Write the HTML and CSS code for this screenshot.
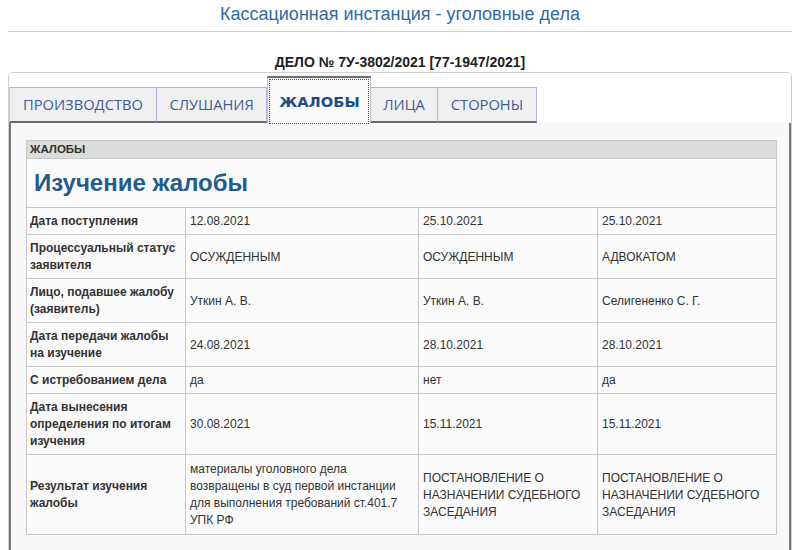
FILE: index.html
```html
<!DOCTYPE html>
<html lang="ru">
<head>
<meta charset="utf-8">
<title>Кассационная инстанция - уголовные дела</title>
<link rel="stylesheet" href="styles.css">
</head>
<body>
<div class="page">
  <h1 class="title">Кассационная инстанция - уголовные дела</h1>
  <div class="case">ДЕЛО № 7У-3802/2021 [77-1947/2021]</div>
  <div class="box">
    <ul class="tabs">
      <li class="tab first">ПРОИЗВОДСТВО</li>
      <li class="tab">СЛУШАНИЯ</li>
      <li class="tab active"><span class="focus">ЖАЛОБЫ</span></li>
      <li class="tab">ЛИЦА</li>
      <li class="tab">СТОРОНЫ</li>
    </ul>
    <div class="panel">
      <table class="grid">
        <colgroup>
          <col class="c1"><col class="c2"><col class="c3"><col class="c4">
        </colgroup>
        <tr><th colspan="4" class="head">ЖАЛОБЫ</th></tr>
        <tr><td colspan="4" class="big">Изучение жалобы</td></tr>
        <tr><td class="lbl">Дата поступления</td><td>12.08.2021</td><td>25.10.2021</td><td>25.10.2021</td></tr>
        <tr><td class="lbl">Процессуальный статус заявителя</td><td>ОСУЖДЕННЫМ</td><td>ОСУЖДЕННЫМ</td><td>АДВОКАТОМ</td></tr>
        <tr><td class="lbl">Лицо, подавшее жалобу (заявитель)</td><td>Уткин А. В.</td><td>Уткин А. В.</td><td>Селигененко С. Г.</td></tr>
        <tr><td class="lbl">Дата передачи жалобы на изучение</td><td>24.08.2021</td><td>28.10.2021</td><td>28.10.2021</td></tr>
        <tr><td class="lbl">С истребованием дела</td><td>да</td><td>нет</td><td>да</td></tr>
        <tr><td class="lbl">Дата вынесения определения по итогам изучения</td><td>30.08.2021</td><td>15.11.2021</td><td>15.11.2021</td></tr>
        <tr class="last"><td class="lbl">Результат изучения жалобы</td><td>материалы уголовного дела возвращены в суд первой инстанции для выполнения требований ст.401.7 УПК РФ</td><td>ПОСТАНОВЛЕНИЕ О НАЗНАЧЕНИИ СУДЕБНОГО ЗАСЕДАНИЯ</td><td>ПОСТАНОВЛЕНИЕ О НАЗНАЧЕНИИ СУДЕБНОГО ЗАСЕДАНИЯ</td></tr>
      </table>
    </div>
  </div>
</div>
</body>
</html>
```
FILE: styles.css
```css
html, body {
  margin: 0;
  padding: 0;
  background: #fff;
  font-family: "Liberation Sans", Arial, sans-serif;
  color: #333;
}

.page {
  padding: 0 8px;
  height: 550px;
  overflow: hidden;
}

.title {
  margin: 0;
  height: 31px;
  line-height: 28px;
  font-size: 18px;
  font-weight: normal;
  text-align: center;
  color: #2f6aa3;
  border-bottom: 1px solid #cfcfcf;
}

.case {
  margin-top: 22px;
  height: 18px;
  line-height: 16px;
  font-size: 14px;
  font-weight: bold;
  text-align: center;
  color: #222;
}

.box {
  border: 1px solid #cfcfcf;
  border-radius: 5px 5px 0 0;
  padding-top: 5px;
  height: 500px;
}

.tabs {
  list-style: none;
  margin: 0;
  padding: 0;
  display: flex;
  align-items: flex-end;
  height: 45px;
}

.tab {
  height: 33px;
  line-height: 33px;
  padding: 0 12.5px;
  font-family: "Open Sans", "Liberation Sans", sans-serif;
  font-size: 14.7px;
  color: #3d5c9c;
  background: #f0f0f0;
  border: 1px solid #b0b0dc;
  border-bottom: 2px solid #6a6a6a;
  border-left-width: 0;
}

.tab.first {
  padding: 0 13px;
  border-left: 1px solid #c8c8c8;
}

.tab.active {
  height: 45px;
  padding: 0;
  background: #fafafa;
  border: 1px solid #c4c4c4;
  border-top: 2px solid #6e6e6e;
  border-bottom: none;
  font-family: "DejaVu Sans", Verdana, sans-serif;
  font-size: 14.7px;
  font-weight: bold;
  color: #1d4b85;
}

.focus {
  display: block;
  height: 39px;
  margin: 1px 1px 0;
  padding: 4px 8px 0 9px;
  line-height: 36px;
  border: 1px dotted #3a52c8;
}

.panel {
  background: #f8f8f8;
  border-left: 2px solid #777;
  border-right: 2px solid #777;
  padding: 17px 13px 16px 15px;
  height: 420px;
}

.grid {
  width: 751px;
  border-collapse: collapse;
  table-layout: fixed;
  background: #fafafa;
  font-size: 12px;
}

.c1 { width: 159px; }
.c2 { width: 233px; }
.c3 { width: 179px; }
.c4 { width: 179px; }

.grid th,
.grid td {
  border: 1px solid #c9c9c9;
  padding: 5px 4px 4px;
  line-height: 17px;
  text-align: left;
  vertical-align: middle;
  color: #333;
}

.grid .last td {
  padding-top: 6px;
  padding-bottom: 5px;
}

.grid .head {
  background: #dcdcdc;
  font-size: 11.5px;
  font-weight: bold;
  padding: 0 3px;
  height: 17px;
  line-height: 17px;
  color: #333;
}

.grid .big {
  height: 38px;
  padding: 5px 7px;
  font-size: 24px;
  font-weight: bold;
  color: #245a8d;
  line-height: 30px;
}

.grid .lbl {
  font-weight: bold;
  padding-left: 3px;
}
```
